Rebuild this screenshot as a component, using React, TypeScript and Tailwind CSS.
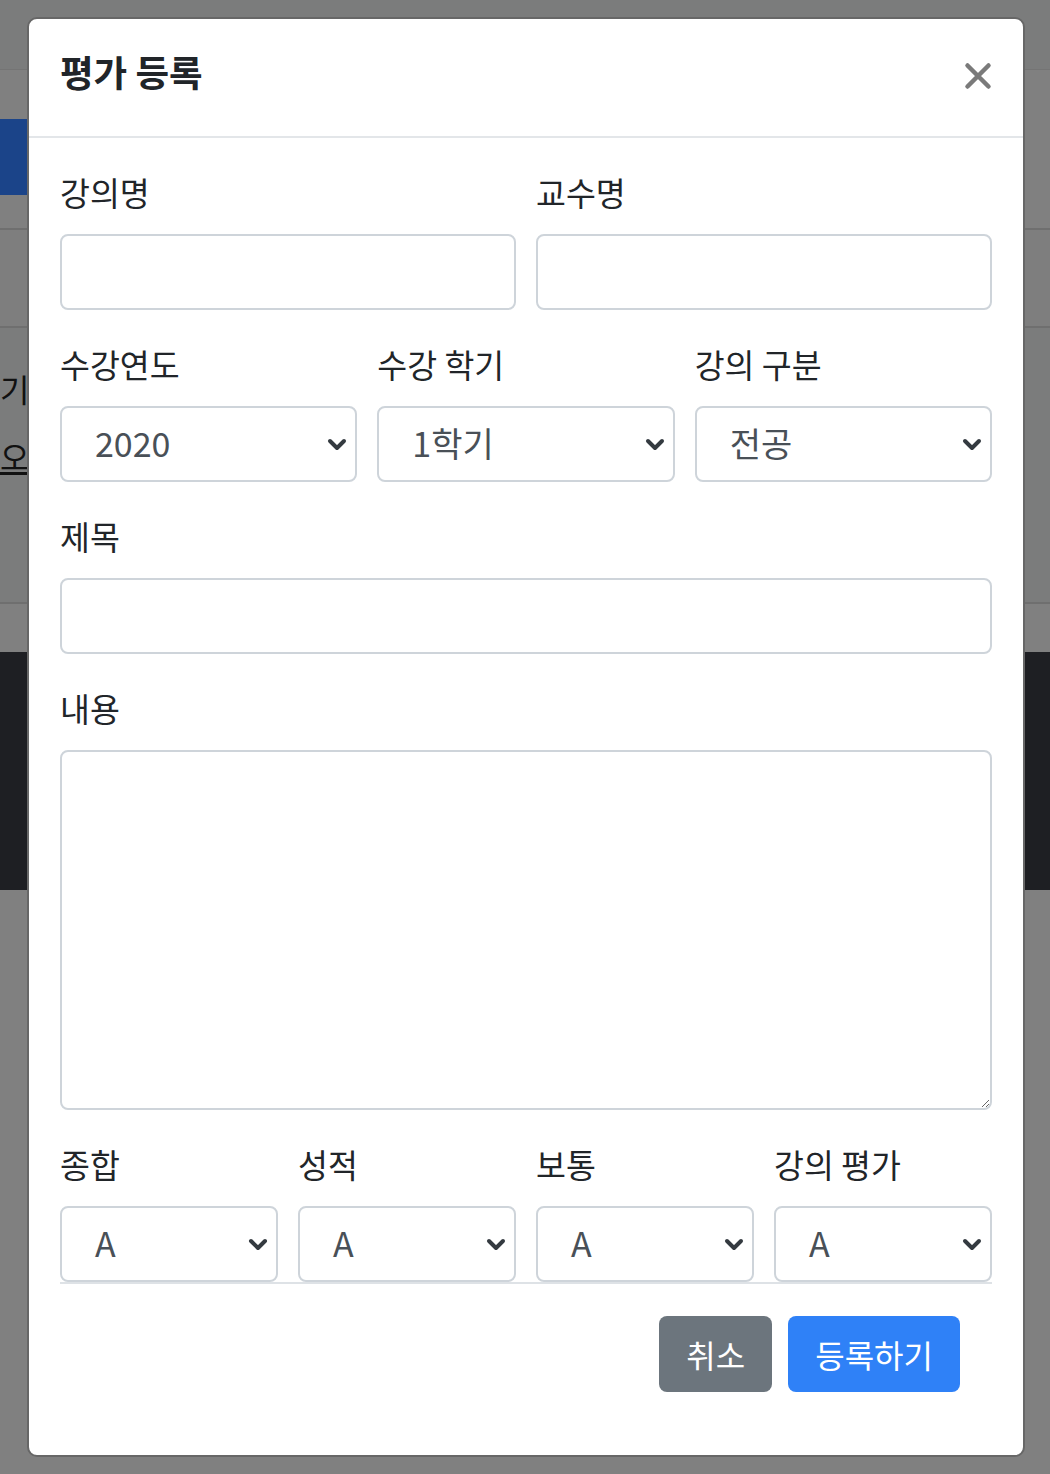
import React from 'react';

const font = { fontFamily: '"Noto Sans CJK KR", "Noto Sans", sans-serif' };

function Chevron() {
  return (
    <svg width="20" height="13" viewBox="0 0 20 13" fill="none">
      <path d="M3 3L10 10L17 3" stroke="#343a40" strokeWidth="4" strokeLinecap="round" strokeLinejoin="round" />
    </svg>
  );
}

function FakeSelect({ value }: { value: string }) {
  return (
    <div className="h-[76px] flex items-center justify-between pl-[33px] pr-[8px] border-2 border-[#ced4da] rounded-[8px] bg-white">
      <span className="text-[34px] text-[#495057] -mt-[3px]">{value}</span>
      <Chevron />
    </div>
  );
}

function Field({ label, children }: { label: string; children: React.ReactNode }) {
  return (
    <div className="flex flex-col">
      <label className="text-[32.5px] leading-[48px] text-[#212529] mb-[18px]">{label}</label>
      {children}
    </div>
  );
}

function TextInput() {
  return <input type="text" className="h-[76px] w-full border-2 border-[#ced4da] rounded-[8px] px-[24px] text-[32px] outline-none" />;
}

export default function App() {
  return (
    <div className="relative w-[1050px] h-[1474px] overflow-hidden bg-[#808080]" style={font}>
      {/* dimmed page behind the modal */}
      <div className="h-[70px] bg-[#7b7c7c] border-b border-[#747474]"></div>
      <div className="h-[158px] pt-[49px]">
        <div className="w-[200px] h-[76px] bg-[#1b4489] rounded-r-[8px]"></div>
      </div>
      <div className="h-[98px] border-t-2 border-[#6f6f6f] bg-[#7e7e7e]"></div>
      <div className="h-[276px] border-t-2 border-[#6f6f6f] bg-[#7b7c7c] pt-[38px]">
        <div className="text-[32px] leading-[44px] text-[#111]">기)</div>
        <div className="mt-[24px] text-[32px] leading-[44px] text-[#111] underline">오.</div>
      </div>
      <div className="h-[50px] border-t-2 border-[#6f6f6f]"></div>
      <div className="h-[238px] bg-[#1e1f23]"></div>

      {/* modal */}
      <div className="absolute left-[27px] top-[17px] w-[998px] h-[1440px] bg-white border-2 border-[#676767] rounded-[10px] flex flex-col">
        <div className="h-[119px] shrink-0 flex items-center justify-between pl-[31px] pr-[31px] border-b-2 border-[#e3e6e9]">
          <h5 className="text-[36.5px] font-bold text-[#212529] -mt-[10px]">평가 등록</h5>
          <svg width="28" height="28" viewBox="0 0 28 28" className="-mt-[4px]">
            <path d="M3.5 3.5L24.5 24.5M24.5 3.5L3.5 24.5" stroke="#7a7a7a" strokeWidth="4.5" strokeLinecap="round" />
          </svg>
        </div>

        <div className="px-[31px] pt-[30px] flex flex-col">
          <div className="grid grid-cols-2 gap-x-[20px]">
            <Field label="강의명"><TextInput /></Field>
            <Field label="교수명"><TextInput /></Field>
          </div>

          <div className="grid grid-cols-3 gap-x-[20px] mt-[30px]">
            <Field label="수강연도"><FakeSelect value="2020" /></Field>
            <Field label="수강 학기"><FakeSelect value="1학기" /></Field>
            <Field label="강의 구분"><FakeSelect value="전공" /></Field>
          </div>

          <div className="mt-[30px]">
            <Field label="제목"><TextInput /></Field>
          </div>

          <div className="mt-[30px]">
            <Field label="내용">
              <textarea className="h-[360px] w-full border-2 border-[#ced4da] rounded-[8px] px-[24px] py-[12px] text-[32px] outline-none" />
            </Field>
          </div>

          <div className="grid grid-cols-4 gap-x-[20px] mt-[30px] border-b-2 border-[#dee2e6]">
            <Field label="종합"><FakeSelect value="A" /></Field>
            <Field label="성적"><FakeSelect value="A" /></Field>
            <Field label="보통"><FakeSelect value="A" /></Field>
            <Field label="강의 평가"><FakeSelect value="A" /></Field>
          </div>

          <div className="flex justify-end gap-[16px] mt-[32px] pr-[32px]">
            <button className="h-[76px] px-[27px] rounded-[8px] bg-[#6c757d] text-white text-[32px]">취소</button>
            <button className="h-[76px] px-[27px] rounded-[8px] bg-[#2f81f7] text-white text-[32px]">등록하기</button>
          </div>
        </div>
      </div>
    </div>
  );
}
